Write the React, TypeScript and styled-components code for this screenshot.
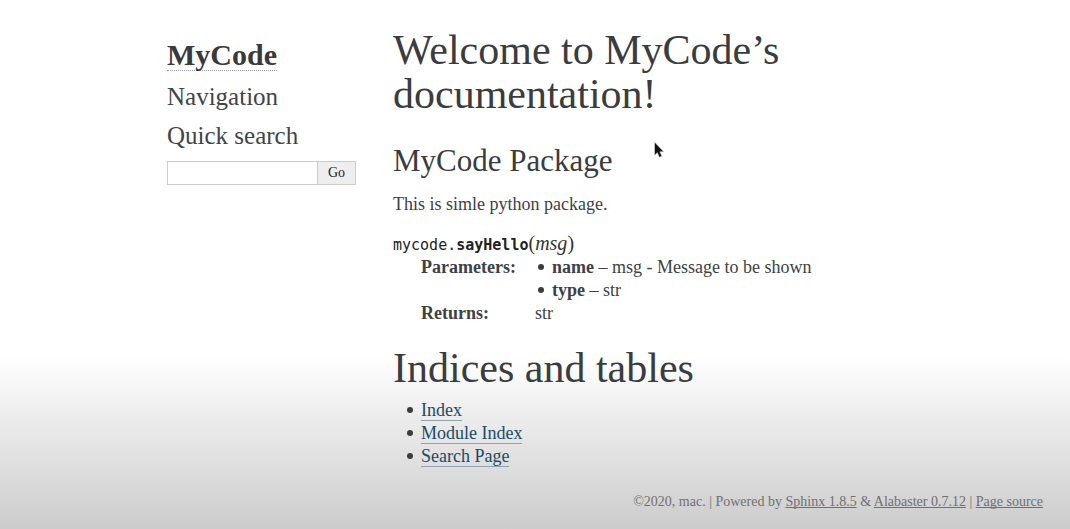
import React from "react";
import styled, { createGlobalStyle } from "styled-components";

const GlobalStyle = createGlobalStyle`
  * { box-sizing: border-box; }
  body {
    margin: 0;
    background: #fff;
    color: #3e4145;
    font-family: Georgia, "Liberation Serif", serif;
    font-size: 18px;
    line-height: 23px;
  }
`;

const Page = styled.div`
  min-height: 100vh;
  padding: 28px 27px 16px 167px;
  background: linear-gradient(to top, #cccccc 0, #ededed 114px, #ffffff 172px);
`;

const Columns = styled.div`
  display: grid;
  grid-template-columns: 189px minmax(0, 1fr);
  column-gap: 37px;
  align-items: start;
`;

const Sidebar = styled.aside`
  padding-top: 12px;
`;

const Brand = styled.h1`
  margin: 0 0 10px;
  font-size: 30px;
  line-height: 30px;
`;

const BrandLink = styled.a`
  display: inline-block;
  color: #3a3a3c;
  text-decoration: none;
  border-bottom: 1px dotted #999;
`;

const SideHeading = styled.h2`
  margin: 0 0 8px;
  color: #444;
  font-size: 25px;
  font-weight: 400;
  line-height: 31px;
`;

const SearchForm = styled.form`
  display: flex;
  height: 24px;
  margin-top: 10px;
`;

const SearchInput = styled.input`
  flex: 1;
  min-width: 0;
  border: 1px solid #ccc;
  border-right: 0;
  background: #fff;
  font: inherit;
  font-size: 14px;
`;

const GoButton = styled.button`
  width: 39px;
  padding: 0;
  border: 1px solid #ccc;
  background: #eee;
  color: #222;
  font-family: inherit;
  font-size: 14px;
`;

const Main = styled.main`
  padding-right: 28px;
`;

const Title = styled.h1`
  margin: 0;
  color: #3b3c3f;
  font-size: 42px;
  font-weight: 400;
  line-height: 44px;
`;

const SectionTitle = styled.h2`
  margin: 26px 0 13px;
  color: #3b3c3f;
  font-size: 31px;
  font-weight: 400;
  line-height: 38px;
`;

const Paragraph = styled.p`
  margin: 0 0 16px;
`;

const Definition = styled.dl`
  margin: 0 0 21px;
`;

const Signature = styled.dt`
  color: #333;
  font-size: 20px;
  line-height: 22px;
`;

const ModuleName = styled.code`
  color: #222;
  font-family: "DejaVu Sans Mono", monospace;
  font-size: 15px;
`;

const FunctionName = styled(ModuleName)`
  font-weight: 700;
`;

const Details = styled.dd`
  margin: 0 0 0 28px;
`;

const Fields = styled.dl`
  display: grid;
  grid-template-columns: 114px minmax(0, 1fr);
  margin: 0;
`;

const FieldName = styled.dt`
  font-weight: 700;
`;

const FieldValue = styled.dd`
  margin: 0;
`;

const BulletList = styled.ul<{ $indent: number }>`
  margin: 0;
  padding-left: ${({ $indent }) => $indent}px;
  list-style: none;

  li::before {
    content: "";
    display: inline-block;
    width: 6px;
    height: 6px;
    margin: 0 8px 3px -14px;
    border-radius: 50%;
    background: #3b3c3f;
  }
`;

const IndexSection = styled.section`
  ${BulletList} {
    margin-top: 9px;
  }
`;

const DocLink = styled.a`
  color: #1b4b66;
  text-decoration: none;
  border-bottom: 1px solid #8fa3ae;
`;

const Footer = styled.footer`
  margin-top: 23px;
  color: #707070;
  font-size: 14px;
  line-height: 22px;
  text-align: right;
`;

const FooterLink = styled.a`
  color: inherit;
  text-decoration: underline;
  text-decoration-thickness: 1px;
  text-decoration-skip-ink: none;
`;

const Pointer = styled.svg`
  position: absolute;
  top: 141px;
  left: 653px;
  pointer-events: none;
`;

export default function App() {
  return (
    <Page>
      <GlobalStyle />
      <Columns>
        <Sidebar>
          <Brand>
            <BrandLink href="#">MyCode</BrandLink>
          </Brand>
          <SideHeading>Navigation</SideHeading>
          <SideHeading id="search-label">Quick search</SideHeading>
          <SearchForm role="search">
            <SearchInput type="text" name="q" aria-labelledby="search-label" />
            <GoButton type="submit">Go</GoButton>
          </SearchForm>
        </Sidebar>
        <Main>
          <Title>Welcome to MyCode’s documentation!</Title>
          <SectionTitle>MyCode Package</SectionTitle>
          <Paragraph>This is simle python package.</Paragraph>
          <Definition>
            <Signature>
              <ModuleName>mycode.</ModuleName>
              <FunctionName>sayHello</FunctionName>(<em>msg</em>)
            </Signature>
            <Details>
              <Fields>
                <FieldName>Parameters:</FieldName>
                <FieldValue>
                  <BulletList $indent={17}>
                    <li><strong>name</strong> – msg - Message to be shown</li>
                    <li><strong>type</strong> – str</li>
                  </BulletList>
                </FieldValue>
                <FieldName>Returns:</FieldName>
                <FieldValue>str</FieldValue>
              </Fields>
            </Details>
          </Definition>
          <IndexSection>
            <Title>Indices and tables</Title>
            <BulletList $indent={28}>
              <li><DocLink href="#index">Index</DocLink></li>
              <li><DocLink href="#modules">Module Index</DocLink></li>
              <li><DocLink href="#search">Search Page</DocLink></li>
            </BulletList>
          </IndexSection>
        </Main>
      </Columns>
      <Footer>
        ©2020, mac. | Powered by <FooterLink href="#sphinx">Sphinx 1.8.5</FooterLink>
        {" & "}
        <FooterLink href="#alabaster">Alabaster 0.7.12</FooterLink>
        {" | "}
        <FooterLink href="#source">Page source</FooterLink>
      </Footer>
      <Pointer width="12" height="18" viewBox="0 0 12 18" aria-hidden="true">
        <path d="M1.5 1v13.2l2.8-2.5 2 4.6 2.6-1.1-2-4.4h3.9z" fill="#111" stroke="#ddd" strokeWidth="0.6" />
      </Pointer>
    </Page>
  );
}
